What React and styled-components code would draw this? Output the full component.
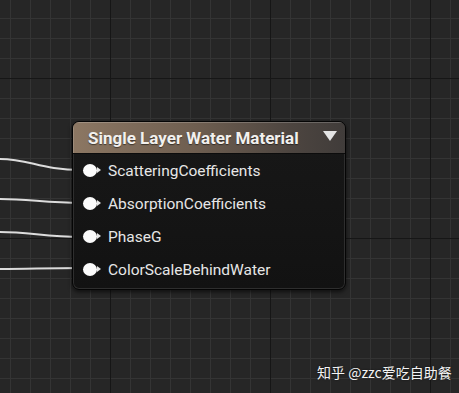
import React from 'react'
import styled, { createGlobalStyle } from 'styled-components'

const GlobalStyle = createGlobalStyle`
  html, body {
    margin: 0;
    padding: 0;
    background: #262626;
  }
`

const pins = [
  'ScatteringCoefficients',
  'AbsorptionCoefficients',
  'PhaseG',
  'ColorScaleBehindWater',
]

// wires coming in from the left edge of the graph
const wires = [
  'M0 159 C 30 159, 40 170, 82 170',
  'M0 199 C 30 199, 45 203, 82 203',
  'M0 232 C 30 232, 45 237, 82 237',
  'M0 269 C 30 269, 45 268, 82 268',
]

const App = () => (
  <>
    <GlobalStyle />
    <Canvas>
      <Wires width="459" height="393">
        {wires.map(d => (
          <path key={d} d={d} stroke="#dcdcdc" strokeWidth="2" fill="none" />
        ))}
      </Wires>
      <Node>
        <Header>
          <Title>Single Layer Water Material</Title>
          <Arrow />
        </Header>
        <Body>
          {pins.map(p => (
            <Row key={p}>
              <Pin />
              <Label>{p}</Label>
            </Row>
          ))}
        </Body>
      </Node>
      <Watermark>知乎 @zzc爱吃自助餐</Watermark>
    </Canvas>
  </>
)

const Canvas = styled.div`
  position: relative;
  width: 459px;
  height: 393px;
  overflow: hidden;
  background-color: #262626;
  background-image: linear-gradient(to right, #161616 1px, transparent 1px),
    linear-gradient(to bottom, #161616 1px, transparent 1px),
    linear-gradient(to right, #343434 1px, transparent 1px),
    linear-gradient(to bottom, #343434 1px, transparent 1px);
  background-size: 160px 160px, 160px 160px, 20px 20px, 20px 20px;
  background-position: 110px 0, 0 78px, 10px 0, 0 18px;
`

const Wires = styled.svg`
  position: absolute;
  left: 0;
  top: 0;
`

const Node = styled.div`
  position: absolute;
  left: 72px;
  top: 121px;
  width: 272px;
  border-radius: 7px;
  background: linear-gradient(to bottom, #181818, #121212);
  border: 1px solid #050505;
  box-shadow: inset 0 0 0 1px #2e2e2e, 0 2px 4px rgba(0, 0, 0, 0.6);
  overflow: hidden;
`

const Header = styled.div`
  display: flex;
  align-items: center;
  justify-content: space-between;
  height: 31px;
  padding: 0 8px 0 15px;
  background: linear-gradient(to right, #8c7763 0%, #6e5e50 45%, #4d4540 80%, #403c3a 100%);
  box-shadow: inset 0 1px 0 rgba(255, 255, 255, 0.2), inset 1px 0 0 rgba(255, 255, 255, 0.15);
  border-bottom: 1px solid #0c0c0c;
`

const Title = styled.span`
  font-family: Roboto, 'Liberation Sans', sans-serif;
  font-weight: 700;
  font-size: 17px;
  color: #f2f0ee;
  text-shadow: 0 1px 1px rgba(0, 0, 0, 0.5);
`

const Arrow = styled.span`
  width: 0;
  height: 0;
  margin-top: -4px;
  border-left: 7px solid transparent;
  border-right: 7px solid transparent;
  border-top: 10px solid #e4e4e4;
`

const Body = styled.div`
  display: flex;
  flex-direction: column;
  padding: 0 0 3px 10px;
`

const Row = styled.div`
  display: flex;
  align-items: center;
  height: 33px;
  gap: 11px;
`

const Pin = styled.span`
  position: relative;
  width: 14px;
  height: 13px;
  border-radius: 50%;
  background: #fbfbfb;
  &::after {
    content: '';
    position: absolute;
    right: -4px;
    top: 3px;
    border-top: 3.5px solid transparent;
    border-bottom: 3.5px solid transparent;
    border-left: 4px solid #e8e8e8;
  }
`

const Label = styled.span`
  font-family: Roboto, 'Liberation Sans', sans-serif;
  font-size: 15.5px;
  color: #e6e6e6;
`

const Watermark = styled.div`
  position: absolute;
  left: 317px;
  top: 362px;
  font-family: 'Noto Sans CJK SC', sans-serif;
  font-size: 14px;
  color: #f4f4f4;
  text-shadow: 0 0 2px rgba(0, 0, 0, 0.6);
`

export default App
